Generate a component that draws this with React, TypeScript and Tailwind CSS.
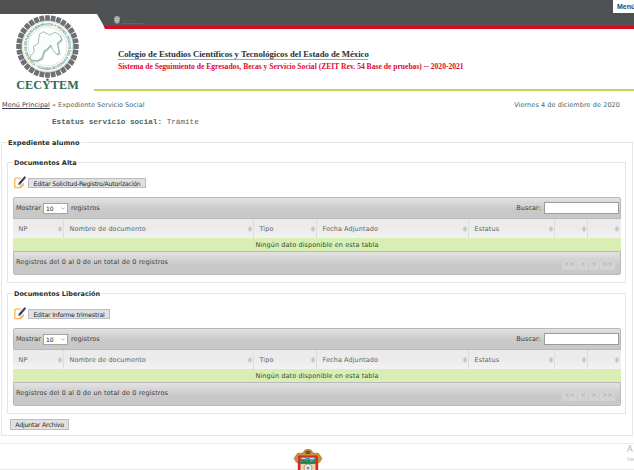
import React from "react";

const SANS = "font-['DejaVu_Sans',sans-serif]";

const STATE = "39.3 34.3 43.3 31.7 50 35 55 32.3 60 35 61.7 39.3 57.3 43.3 59.3 52.7 56.7 54.3 53.3 50.7 50.7 45 46.7 49.3 44.3 50.7 41.7 58.3 37.3 60.7 31 60 30.3 56 34.3 51.7 33.3 46.7 38.3 43.3";

function Logo() {
  const blocks = Array.from({ length: 32 }, (_, i) => i * (360 / 32));
  return (
    <svg className="absolute left-[14px] top-[14px]" width="68" height="78" viewBox="14 14 68 78">
      <circle cx="47.5" cy="46.5" r="32" fill="#fff" />
      {blocks.map((a) => (
        <rect key={a} x="45.1" y="15.2" width="4.8" height="5.6" rx="0.6" fill="#6f7173" transform={`rotate(${a} 47.5 46.5)`} />
      ))}
      <circle cx="47.5" cy="46.5" r="25.2" fill="#fff" stroke="#8fbcab" strokeWidth="0.4" />
      <circle cx="47.5" cy="46.5" r="19.4" fill="none" stroke="#9cc4b5" strokeWidth="0.4" />
      <defs>
        <path id="ring" d="M35.5 63.6A20.9 20.9 0 1 1 59.5 63.6A20.9 20.9 0 0 1 35.5 63.6" />
      </defs>
      <text fontFamily="Liberation Sans, sans-serif" fontWeight="bold" fontSize="3.7" fill="#5b957e">
        <textPath href="#ring" textLength="129">COLEGIO DE ESTUDIOS CIENTÍFICOS Y TECNOLÓGICOS DEL ESTADO DE MÉXICO • </textPath>
      </text>
      <polygon points={STATE} transform="translate(1.2 1.3)" fill="#bcc4c0" />
      <polygon points={STATE} fill="#fbfdfc" stroke="#57987e" strokeWidth="0.6" />
      <text x="16.2" y="88.9" textLength="62.5" lengthAdjust="spacingAndGlyphs" fontFamily="Liberation Serif, serif" fontWeight="bold" fontSize="12" fill="#2b6c55">CECYTEM</text>
      <circle cx="47.5" cy="79.8" r="1.2" fill="#2b6c55" />
    </svg>
  );
}

function Header() {
  return (
    <header className="relative h-[92px] overflow-hidden">
      <svg className="absolute left-0 top-0" width="634" height="92">
        <path d="M0 0H634V26.3H104L97 14H0z" fill="#505153" />
        <path d="M103.6 26H634V29H105z" fill="#d70a22" />
        <path d="M94 90.1H634" stroke="#9dca2e" strokeWidth="1.5" />
        <path d="M114 18l1-1.5 2-.5 2 .5 1 1.5-.6 4.5-2.4 1.5-2.4-1.5z" fill="#a5a6a7" />
        <path d="M115.5 18.5h3M115.3 20.5h3.4" stroke="#d5d5d5" strokeWidth=".7" />
        <text x="122" y="21.4" fontSize="2.2" textLength="15" fill="#6a6c6e" fontFamily="Liberation Sans, sans-serif">GOBIERNO DEL</text>
        <text x="122" y="24.2" fontSize="2.4" textLength="21.5" fill="#808284" fontFamily="Liberation Sans, sans-serif">ESTADO DE MÉXICO</text>
      </svg>
      <Logo />
      <div className="ml-[118px] pt-[48px] font-['Liberation_Serif',serif] font-bold whitespace-nowrap">
        <div className="h-[12px] w-[250px] border-b border-[#a5a5aa] text-[8.68px] leading-[12px] text-[#2a3038]">
          Colegio de Estudios Científicos y Tecnológicos del Estado de México
        </div>
        <div className="mt-[1px] text-[7.6px] leading-[11px] text-[#e0092d]">
          Sistema de Seguimiento de Egresados, Becas y Servicio Social (ZEIT Rev. 54 Base de pruebas) -- 2020-2021
        </div>
      </div>
      <div className="absolute left-[613px] top-0 h-[13px] w-[21px] overflow-hidden bg-white pl-[4px] font-['Liberation_Sans',sans-serif] text-[7px] font-bold leading-[13px] text-[#33445c]">
        Menú
      </div>
    </header>
  );
}

function EditIcon() {
  return (
    <svg width="12" height="13" viewBox="0 0 12 13" className="shrink-0">
      <path d="M7 2H1.8Q.8 2 .8 3v7.8q0 1 1 1H6.5L9.2 9V7" fill="#fffdf8" stroke="#f8a63c" strokeWidth="1.1" />
      <path d="M6.3 11.8V9h2.8" fill="none" stroke="#f8a63c" strokeWidth=".9" />
      <path d="M10.7.6l1 .9-5.1 6-1.9 1 .7-2z" fill="#28336d" stroke="#28336d" strokeWidth=".8" />
    </svg>
  );
}

function Button({ children, className }: { children: React.ReactNode; className: string }) {
  return (
    <button className={`border border-[#bdbdbd] bg-[#e1e1e1] text-center whitespace-nowrap text-[#222] ${className}`}>
      {children}
    </button>
  );
}

function Sort() {
  return (
    <svg width="4" height="6" viewBox="0 0 4 6" className="mt-px shrink-0">
      <path d="M.5 2.3L2 .7l1.5 1.6zM.5 3.7L2 5.3l1.5-1.6z" fill="#f0f0f0" stroke="#9a9a9a" strokeWidth=".55" />
    </svg>
  );
}

const columns = ["NP", "Nombre de documento", "Tipo", "Fecha Adjuntado", "Estatus", "", ""];

function DataTable() {
  return (
    <div className="w-[608px] text-[6.5px]">
      <div className="flex h-[22px] items-center justify-between rounded-t-[2px] border border-[#b9b9b9] bg-linear-to-b from-[#e2e2e2] to-[#c8c8c8] to-60% pl-[2px] pr-px text-[#3d3d3d]">
        <div className="flex items-center">
          <span className="w-[27px] whitespace-nowrap pt-px">Mostrar</span>
          <div className="flex h-[11px] w-[25px] items-center justify-between border border-[#a4a4a4] bg-white pl-[2px] pr-[2px] text-[6px] text-[#222]">
            10
            <svg width="4" height="3" viewBox="0 0 4 3"><path d="M.3.5L2 2.2 3.7.5" fill="none" stroke="#777" strokeWidth=".6" /></svg>
          </div>
          <span className="ml-[3px] pt-px tracking-[0.04px]">registros</span>
        </div>
        <div className="flex items-center">
          <span className="pt-px tracking-[0.06px]">Buscar:</span>
          <div className="ml-[3px] h-[12px] w-[75px] border border-[#9c9c9c] bg-white" />
        </div>
      </div>
      <div className="grid h-[19px] grid-cols-[51px_190px_63px_152px_86px_33px_33px] text-[#656565]">
        {columns.map((c, i) => (
          <div key={i} className="flex items-center justify-between whitespace-nowrap border-r border-[#dcdcdc] bg-linear-to-b from-[#ebebeb] from-50% to-[#f3f3f3] pl-[5.5px] pr-px last:border-[#eee]">
            <span className="pt-[2px] tracking-[0.08px]">{c}</span>
            <Sort />
          </div>
        ))}
      </div>
      <div className="h-[13px] bg-[#d9eeb4] text-center leading-[14px] tracking-[0.09px] text-[#344f2f]">Ningún dato disponible en esta tabla</div>
      <div className="flex h-[24px] items-start justify-between rounded-b-[2px] border border-[#b9b9b9] bg-linear-to-b from-[#e2e2e2] to-[#c8c8c8] to-60% pl-[2px] pr-[5px] text-[#3d3d3d]">
        <span className="leading-[20px] tracking-[0.12px]">Registros del 0 al 0 de un total de 0 registros</span>
        <div className="mt-[6px] grid h-[11px] grid-cols-[15px_10px_10px_15px] gap-px text-center text-[6px] leading-[12px] text-[#a4a4a4]">
          {["<<", "<", ">", ">>"].map((p) => (
            <span key={p} className="bg-[#d3d3d3]">{p}</span>
          ))}
        </div>
      </div>
    </div>
  );
}

function Section({ title, button, width, className }: { title: string; button: string; width: string; className: string }) {
  return (
    <fieldset className={`ml-[5px] h-[125px] w-[619px] border border-[#e6e6e6] pl-[5px] ${className}`}>
      <legend className="h-[9px] px-[1px] text-[6.5px] font-bold leading-[10px] text-[#1f2f2c]">{title}</legend>
      <div className="flex h-[30px] items-start gap-[2px] pl-[1px] pt-[9px]">
        <EditIcon />
        <Button className={`mt-[2px] h-[10px] text-[6.2px] leading-[9px] tracking-[-0.21px] ${width}`}>{button}</Button>
      </div>
      <DataTable />
    </fieldset>
  );
}

function Crest() {
  return (
    <svg width="32" height="21" viewBox="0 0 32 21">
      <path d="M6 4Q12 5 12 2q4-4 8 0 0 3 6 2l4 5-2 4-2 1v7H6v-7l-2-1-2-4z" fill="#c7932f" stroke="#8d6b2c" strokeWidth=".5" />
      <path d="M13 3l3-1.5L19 3l-1 2h-4z" fill="#745526" />
      <path d="M6 6.5h20V21H6z" fill="#e0252e" />
      <path d="M8.5 8h15v7h-15z" fill="#2eaac6" />
      <path d="M8.5 12l3-2 3 2 2-2 3 3 4-3v5h-15z" fill="#368442" />
      <path d="M10 9.5h3M18 9.5h4" stroke="#d4edf0" />
      <path d="M8.5 15h15v6h-15z" fill="#e7d8b0" />
      <circle cx="16" cy="19" r="4" fill="#f2efea" stroke="#987f5b" strokeWidth=".7" />
      <circle cx="16" cy="19" r="1.5" fill="#6699a8" />
    </svg>
  );
}

export default function App() {
  return (
    <div className={`relative h-[470px] w-[634px] overflow-hidden bg-white ${SANS}`}>
      <Header />
      <div className="flex h-[25px] justify-between whitespace-nowrap pl-[2px] pr-[14px] pt-[8px] text-[6.5px] leading-[11px] text-[#46645f]">
        <div className="tracking-[0.02px]"><a className="text-[#2c3f55] underline">Menú Principal</a> » Expediente Servicio Social</div>
        <div className="tracking-[0.07px]">Viernes 4 de diciembre de 2020</div>
      </div>
      <div className="h-[21px] pl-[52px] font-['Liberation_Mono',monospace] text-[7.65px] leading-[10px] text-[#4a6861]">
        <b>Estatus servicio social:</b> Trámite
      </div>
      <fieldset className="ml-[1px] h-[298px] w-[632px] border border-[#e6e6e6]">
        <legend className="ml-[5px] h-[9px] px-[1px] text-[6.6px] font-bold leading-[10px] text-[#1f2f2c]">Expediente alumno</legend>
        <Section title="Documentos Alta" button="Editar Solicitud-Registro/Autorización" width="w-[118px]" className="mt-[11px]" />
        <Section title="Documentos Liberación" button="Editar Informe trimestral" width="w-[82px]" className="mt-[6px]" />
        <Button className="ml-[8px] mt-[5px] block h-[11px] w-[59px] text-[6.2px] leading-[10px] tracking-[-0.18px]">Adjuntar Archivo</Button>
      </fieldset>
      <footer className="relative mt-[7px] flex h-[27px] justify-center border-y border-[#ebebeb] pr-[18px] pt-[5px]">
        <Crest />
        <div className="absolute left-[627px] top-0 font-['Open_Sans',sans-serif] whitespace-nowrap text-[#b4b4b4]">
          <div className="text-[9px] leading-[10px]">A</div>
          <div className="text-[6px] leading-[11px]">Ve</div>
        </div>
      </footer>
    </div>
  );
}
